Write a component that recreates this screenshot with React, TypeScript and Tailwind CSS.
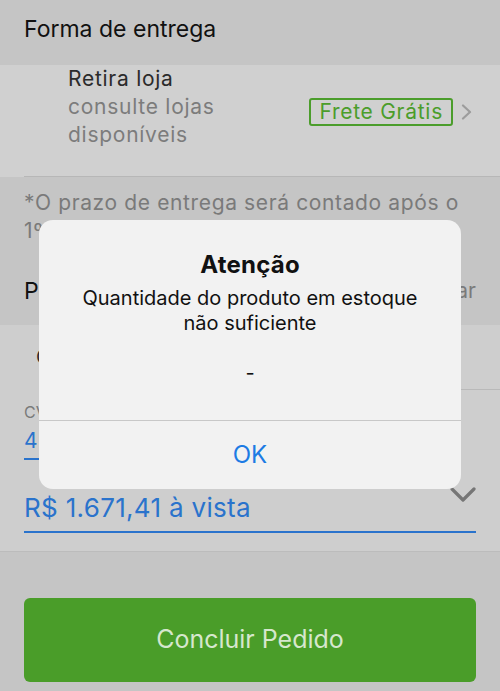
import React from 'react';

const ChevronRight: React.FC = () => (
    <svg width="12" height="16" viewBox="0 0 12 16" className="shrink-0">
        <polyline points="2,1.5 9,8 2,14.5" fill="none" stroke="#9c9c9c" strokeWidth="2.2" strokeLinecap="round" strokeLinejoin="round" />
    </svg>
);

const ChevronDown: React.FC = () => (
    <svg width="26" height="18" viewBox="0 0 26 18" className="shrink-0 -mt-[6px]">
        <polyline points="2,3 13,14 24,3" fill="none" stroke="#767676" strokeWidth="3.2" strokeLinecap="round" strokeLinejoin="round" />
    </svg>
);

const AlertDialog: React.FC = () => (
    <div className="absolute left-[39px] top-[220px] w-[422px] h-[269px] rounded-[14px] bg-[#f2f2f2] flex flex-col">
        <div className="h-[200px] flex flex-col items-center text-center text-[#111] pt-[31px]">
            <h3 className="text-[24px] leading-[28px] font-bold tracking-[0.01em]">Atenção</h3>
            <p className="mt-[7px] text-[20px] leading-[25px] whitespace-pre-line">
                {'Quantidade do produto em estoque\nnão suficiente\n\n-'}
            </p>
        </div>
        <button className="flex-1 border-t border-[#c8c8c8] text-[24px] text-[#1d7be4]">OK</button>
    </div>
);

const App: React.FC = () => {
    return (
        <div className="relative h-[691px] overflow-hidden bg-[#c5c5c5] font-['Inter','Liberation_Sans',sans-serif]">
            {/* forma de entrega */}
            <div className="h-[65px] px-6 pt-[15px] text-[23px] leading-[28px] text-[#111]">Forma de entrega</div>

            <div className="h-[112px] bg-[#d0d0d0] pl-6">
                <div className="h-full flex items-start border-b border-[#b7b7b7] pr-[27px]">
                    <div className="flex-1 pl-[44px] text-[21px] leading-[28px] tracking-[0.035em]">
                        <p className="text-[#2b2b2b]">Retira loja</p>
                        <p className="text-[#7c7c7c]">consulte lojas<br />disponíveis</p>
                    </div>
                    <div className="mt-[33px] flex items-center gap-[8px]">
                        <span className="h-[28px] px-[8px] border-2 border-[#4b9d2b] rounded-[3px] text-[21px] leading-[24px] tracking-[0.035em] text-[#4b9d2b]">Frete Grátis</span>
                        <ChevronRight />
                    </div>
                </div>
            </div>

            <div className="px-6 pt-3 pb-[20px]">
                <p className="text-[21px] leading-[28px] tracking-[0.03em] text-[#7a7a7a]">
                    *O prazo de entrega será contado após o 1º dia útil da aprovação do pagamento.
                </p>
                <div className="mt-[32px] h-[28px] flex items-center justify-between">
                    <span className="text-[23px] text-[#111]">Pagamento</span>
                    <span className="text-[21px] text-[#7a7a7a]">Alterar</span>
                </div>
            </div>

            {/* pagamento */}
            <div className="bg-[#cecece] border-b border-[#bcbcbc] pb-[18px]">
                <div className="h-[64px] flex items-center pl-[36px]">
                    <span className="text-[20px] text-[#2b2b2b]">Cartão de Crédito</span>
                </div>
                <div className="ml-[68px] border-t border-[#b9b9b9]" />
                <div className="px-6">
                    <div className="pt-[12px] text-[16px] leading-[20px] text-[#7a7a7a]">CVV</div>
                    <div className="mt-[7px] w-[180px] pb-[5px] border-b-2 border-[#2a73cc] text-[21px] leading-[24px] text-[#2a73cc]">4</div>
                    <div className="mt-[32px] flex items-start justify-between pb-[7px] border-b-2 border-[#2a73cc]">
                        <span className="text-[26px] leading-[32px] tracking-[0.012em] text-[#2a73cc]">R$ 1.671,41 à vista</span>
                        <ChevronDown />
                    </div>
                </div>
            </div>

            <div className="px-6 pt-[46px]">
                <button className="w-full h-[84px] rounded-[6px] bg-[#4a9d29] text-[25px] text-[#d6e7cd]">Concluir Pedido</button>
            </div>

            <AlertDialog />
        </div>
    );
};

export default App;
